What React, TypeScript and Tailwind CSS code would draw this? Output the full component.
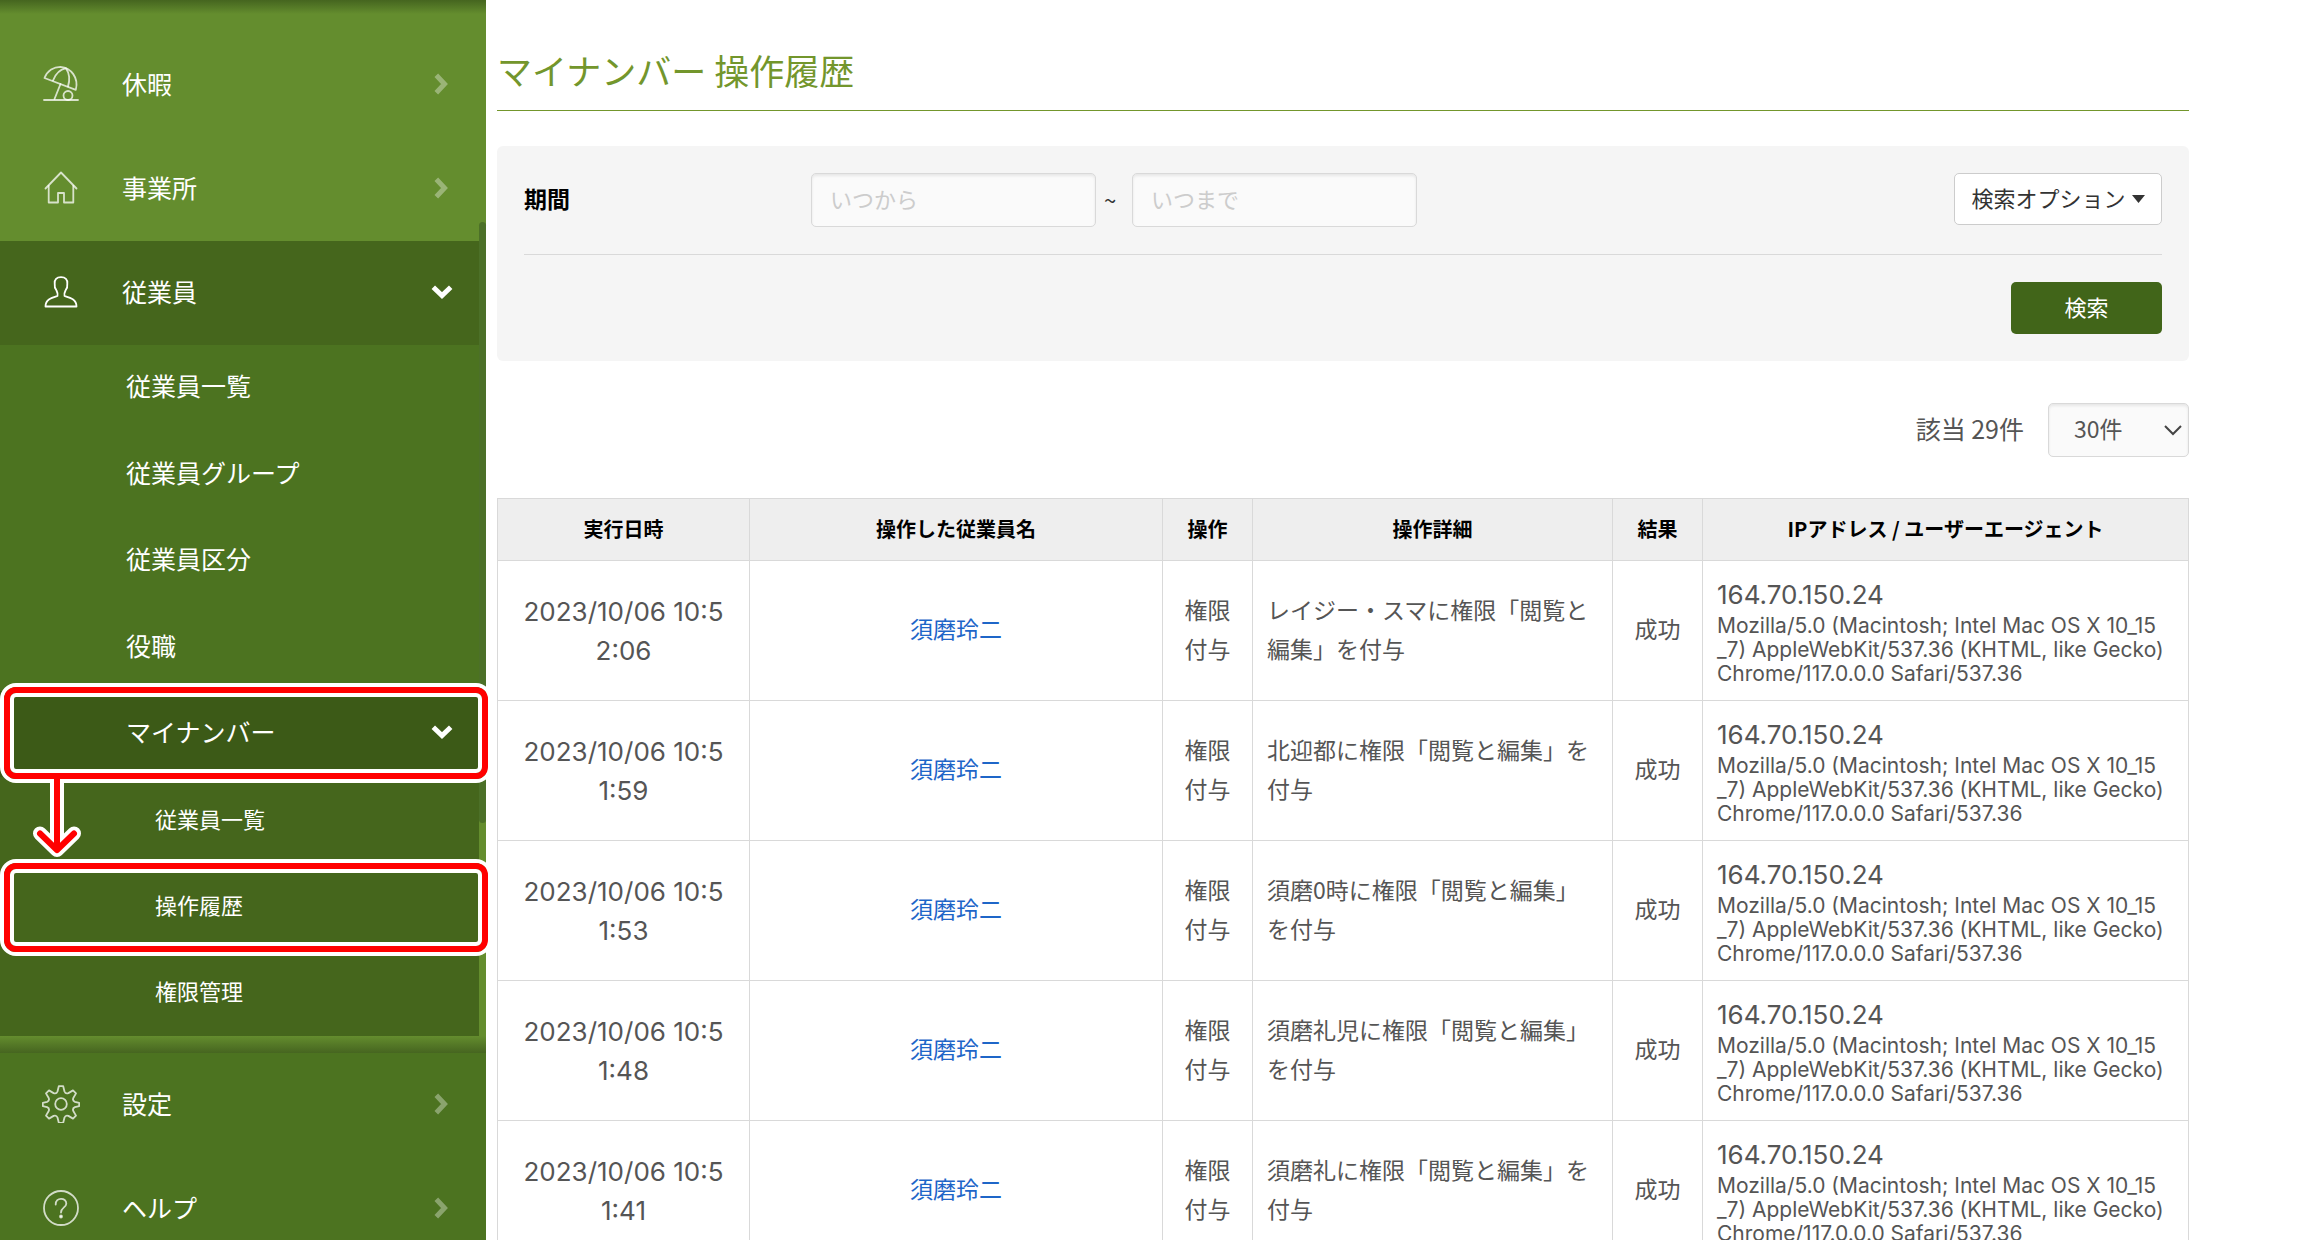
import React from "react";

type IconProps = { className?: string };

const stroke = {
  fill: "none",
  stroke: "currentColor",
  strokeWidth: 1.8,
  strokeLinejoin: "round" as const,
  strokeLinecap: "round" as const,
};

const UmbrellaIcon = ({ className }: IconProps) => (
  <svg viewBox="0 0 38 38" className={className} {...stroke} aria-hidden="true">
    <path d="M2.5 13C5.500 5.500 12 1.800 18.500 1.800C29 2.500 37 13 33.800 24.800Z" />
    <path d="M11 15.500C13.500 9 18 4.500 24 3.200C27.500 8.500 28 15 26 21.500" />
    <path d="M18.500 19L12.500 34" />
    <path d="M2 35H36" />
    <circle cx="26" cy="30.500" r="4.500" />
  </svg>
);

const HouseIcon = ({ className }: IconProps) => (
  <svg viewBox="0 0 38 38" className={className} {...stroke} aria-hidden="true">
    <path d="M3.500 19.500L19 3.500L34.500 19.500" />
    <path d="M6.700 17V33.500H16V24H22V33.500H31.300V17" />
  </svg>
);

const PersonIcon = ({ className }: IconProps) => (
  <svg viewBox="0 0 38 38" className={className} {...stroke} aria-hidden="true">
    <path d="M19 4.200C14.500 4.200 12.400 6.500 12.700 10.500C12.300 13.500 13 15.500 14.500 17.500C15.500 19.500 16 21.500 15.500 23C9 25 3.500 26.500 3.500 33.500H34.500C34.500 26.500 29 25 22.500 23C22 21.500 22.500 19.500 23.500 17.500C25 15.500 25.700 13.500 25.300 10.500C25.600 6.500 23.500 4.200 19 4.200Z" />
  </svg>
);

const GearIcon = ({ className }: IconProps) => (
  <svg viewBox="0 0 38 38" className={className} {...stroke} aria-hidden="true">
    <path d="M16.800 1.200h4.400l1.300 5.300a3 3 0 0 0 3.900 1.600l4.600-2.700l3 3l-2.700 4.600a3 3 0 0 0 1.600 3.900l4.300 1v3.200l-4.300 1a3 3 0 0 0-1.600 3.900l2.700 4.600l-3 3l-4.600-2.700a3 3 0 0 0-3.900 1.600l-1.300 5.300h-4.400l-1.300-5.300a3 3 0 0 0-3.900-1.600l-4.600 2.700l-3-3l2.700-4.600a3 3 0 0 0-1.600-3.900l-4.300-1v-3.200l4.300-1a3 3 0 0 0 1.600-3.900l-2.700-4.600l3-3l4.600 2.700a3 3 0 0 0 3.900-1.600z" />
    <circle cx="19" cy="19" r="5.800" />
  </svg>
);

const HelpIcon = ({ className }: IconProps) => (
  <svg viewBox="0 0 38 38" className={className} {...stroke} aria-hidden="true">
    <circle cx="19" cy="19" r="17" />
    <path d="M13.700 15.500C13.500 8 24.500 8 24.300 14.800C24.200 18.500 19 18.500 19 23.500" />
    <circle cx="19" cy="27.500" r="1" fill="currentColor" />
  </svg>
);

const ChevronRight = () => (
  <svg viewBox="0 0 14 22" className="h-[22px] w-[14px] text-white/35" aria-hidden="true">
    <path d="M2.300 2.300L10.500 11L2.300 19.700" fill="none" stroke="currentColor" strokeWidth="5" />
  </svg>
);

const ChevronDown = () => (
  <svg viewBox="0 0 22 14" className="h-[14px] w-[22px] text-white" aria-hidden="true">
    <path d="M2.300 2.300L11 10.500L19.700 2.300" fill="none" stroke="currentColor" strokeWidth="5" />
  </svg>
);

type MainItemProps = {
  label: string;
  Icon: React.FC<IconProps>;
  open?: boolean;
};

const MainItem = ({ label, Icon, open = false }: MainItemProps) => (
  <a
    href="#"
    className={
      "flex h-[104px] w-full items-center pl-[42px] text-[25px] text-white " +
      (open ? "bg-[#45661c] pr-[26px] pb-0.5" : "pr-[31px] pb-0.5")
    }
  >
    <Icon className={"h-[38px] w-[38px] " + (open ? "text-white" : "text-white/75")} />
    <span className="ml-[42px] flex-1">{label}</span>
    {open ? <ChevronDown /> : <ChevronRight />}
  </a>
);

type SubItem = {
  label: string;
  level: "sub" | "parent" | "nested";
  mark?: "from" | "to";
};

const subItems: SubItem[] = [
  { label: "従業員一覧", level: "sub" },
  { label: "従業員グループ", level: "sub" },
  { label: "従業員区分", level: "sub" },
  { label: "役職", level: "sub" },
  { label: "マイナンバー", level: "parent", mark: "from" },
  { label: "従業員一覧", level: "nested" },
  { label: "操作履歴", level: "nested", mark: "to" },
  { label: "権限管理", level: "nested" },
];

const levelClass = {
  sub: "bg-[#4c7320] pl-[126px] text-[25px]",
  parent: "bg-[#3c5a17] pl-[126px] text-[25px]",
  nested: "bg-[#45661c] pl-[155px] text-[22px]",
};

const Frame = ({ className }: { className: string }) => (
  <span
    className={
      "pointer-events-none absolute left-0 z-10 w-[492px] rounded-[16px] border-4 border-white " + className
    }
  >
    <span className="block h-full rounded-[12px] border-6 border-[#ff0000]">
      <span className="block h-full rounded-[6px] border-4 border-white" />
    </span>
  </span>
);

const Arrow = () => (
  <svg
    viewBox="0 0 50 80"
    className="pointer-events-none absolute top-[87px] left-8 z-20 h-20 w-[50px]"
    fill="none"
    strokeLinecap="round"
    strokeLinejoin="round"
    aria-hidden="true"
  >
    <path d="M25 5V71" stroke="#fff" strokeWidth="14" strokeLinecap="butt" />
    <path d="M8 55.500L25 72L42 55.500" stroke="#fff" strokeWidth="14" />
    <path d="M25 0V71" stroke="#f00" strokeWidth="6" strokeLinecap="butt" />
    <path d="M8 55.500L25 72L42 55.500" stroke="#f00" strokeWidth="6" />
  </svg>
);

const Sidebar = () => (
  <aside className="relative flex w-[486px] shrink-0 flex-col bg-[#648d2e]">
    <div className="pointer-events-none absolute inset-x-0 top-0 h-[14px] bg-linear-to-b from-[#45651f] to-[#648d2e]" />
    <div className="flex">
      <nav className="w-[479px] pt-[33px]">
        <MainItem label="休暇" Icon={UmbrellaIcon} />
        <MainItem label="事業所" Icon={HouseIcon} />
        <MainItem label="従業員" Icon={PersonIcon} open />
        <ul className="grid h-[691px] grid-rows-8">
          {subItems.map((item, i) => (
            <li key={i} className="relative">
              <a
                href="#"
                className={"flex h-full items-center pr-[26px] pb-1 text-white " + levelClass[item.level]}
              >
                <span className="flex-1">{item.label}</span>
                {item.level === "parent" && <ChevronDown />}
              </a>
              {item.mark === "from" && (
                <>
                  <Frame className="-top-2 -bottom-1.5" />
                  <Arrow />
                </>
              )}
              {item.mark === "to" && <Frame className="-top-1 -bottom-1.5" />}
            </li>
          ))}
        </ul>
      </nav>
      <div className="flex-1 pt-[222px]">
        <div className="h-[601px] rounded-full bg-[#4c7028]" />
      </div>
    </div>
    <div className="h-[17px] shrink-0 bg-linear-to-b from-[#648d2e] to-[#466520]" />
    <nav className="flex-1 bg-[#4c7320] pr-[7px]">
      <MainItem label="設定" Icon={GearIcon} />
      <MainItem label="ヘルプ" Icon={HelpIcon} />
    </nav>
  </aside>
);

const fieldClass =
  "h-[54px] rounded-[5px] border border-[#d9d9d9] bg-[#fafafa] pb-1 shadow-[inset_0_2px_3px_rgba(0,0,0,0.08)]";

const SearchPanel = () => (
  <form className="mt-[35px] rounded-[6px] bg-[#f5f5f5] p-[27px]" onSubmit={(e) => e.preventDefault()}>
    <div className="flex items-start border-b border-[#d9d9d9] pb-[27px]">
      <label htmlFor="from" className="w-[287px] text-[23px] leading-[50px] font-bold text-black">
        期間
      </label>
      <input
        id="from"
        type="text"
        placeholder="いつから"
        className={fieldClass + " w-[285px] px-[18px] text-[22px] placeholder:text-[#ccc]"}
      />
      <span className="w-[36px] pr-2 text-center text-[22px] leading-[52px] text-[#333]">~</span>
      <input
        id="to"
        type="text"
        aria-label="いつまで"
        placeholder="いつまで"
        className={fieldClass + " w-[285px] px-[18px] text-[22px] placeholder:text-[#ccc]"}
      />
      <button
        type="button"
        className="ml-auto flex h-[52px] w-[208px] items-center justify-center gap-1.5 rounded-[5px] border border-[#ccc] bg-white text-[22px] text-[#333]"
      >
        <span className="pb-1">検索オプション</span>
        <svg viewBox="0 0 13 8" className="h-2 w-[13px]" aria-hidden="true">
          <path d="M0 0H13L6.500 8Z" fill="currentColor" />
        </svg>
      </button>
    </div>
    <div className="flex justify-end pt-[27px]">
      <button type="submit" className="h-[52px] w-[151px] rounded-[5px] bg-[#416519] pb-1 text-[22px] text-white">
        検索
      </button>
    </div>
  </form>
);

const details = [
  { time: ["2023/10/06 10:5", "2:06"], detail: "レイジー・スマに権限「閲覧と編集」を付与" },
  { time: ["2023/10/06 10:5", "1:59"], detail: "北迎都に権限「閲覧と編集」を付与" },
  { time: ["2023/10/06 10:5", "1:53"], detail: "須磨0時に権限「閲覧と編集」を付与" },
  { time: ["2023/10/06 10:5", "1:48"], detail: "須磨礼児に権限「閲覧と編集」を付与" },
  { time: ["2023/10/06 10:5", "1:41"], detail: "須磨礼に権限「閲覧と編集」を付与" },
];

const headers = ["実行日時", "操作した従業員名", "操作", "操作詳細", "結果", "IPアドレス / ユーザーエージェント"];

const border = "border border-[#d9d9d9]";
const latinCell = border + " px-[14px] font-['Inter',sans-serif]";
const cell = border + " px-[14px] pb-1";

const HistoryTable = () => (
  <table className="mt-[41px] w-full table-fixed border-collapse text-[23px] leading-[39px] text-[#555]">
    <colgroup>
      <col className="w-[252px]" />
      <col />
      <col className="w-[90px]" />
      <col className="w-[360px]" />
      <col className="w-[90px]" />
      <col className="w-[486px]" />
    </colgroup>
    <thead>
      <tr className="h-[62px] bg-[#eee] text-[20px] text-black">
        {headers.map((h) => (
          <th key={h} scope="col" className={border + " pb-0.5 font-bold whitespace-nowrap"}>
            {h}
          </th>
        ))}
      </tr>
    </thead>
    <tbody>
      {details.map((row) => (
        <tr key={row.time[1]} className="h-[140px]">
          <td className={latinCell + " text-center text-[26px]"}>
            {row.time[0]}
            <wbr />
            {row.time[1]}
          </td>
          <td className={cell + " text-center"}>
            <a href="#" className="text-[#1e66c8]">
              須磨玲二
            </a>
          </td>
          <td className={cell + " text-center"}>権限付与</td>
          <td className={cell + " break-all"}>{row.detail}</td>
          <td className={cell + " text-center"}>成功</td>
          <td className={latinCell + " whitespace-nowrap"}>
            <div className="text-[26px]">164.70.150.24</div>
            <div className="text-[21px] leading-6">
              Mozilla/5.0 (Macintosh; Intel Mac OS X 10_15
              <br />
              _7) AppleWebKit/537.36 (KHTML, like Gecko)
              <br />
              Chrome/117.0.0.0 Safari/537.36
            </div>
          </td>
        </tr>
      ))}
    </tbody>
  </table>
);

export default function App() {
  return (
    <div className="flex h-screen overflow-hidden bg-white font-['Noto_Sans_CJK_JP',sans-serif]">
      <Sidebar />
      <main className="min-w-0 flex-1 pr-[111px] pl-[11px]">
        <h1 className="border-b border-[#73962c] pt-[44px] pb-[14px] text-[35px] leading-[52px] text-[#73962c]">
          マイナンバー 操作履歴
        </h1>
        <SearchPanel />
        <div className="mt-[42px] flex items-center justify-end gap-6 text-[#555]">
          <label htmlFor="count" className="pb-0.5 text-[25px]">
            該当 29件
          </label>
          <span className="relative flex">
            <select
              id="count"
              defaultValue="30"
              className={fieldClass + " w-[141px] appearance-none pl-[25px] text-[23px]"}
            >
              <option value="30">30件</option>
              <option value="50">50件</option>
            </select>
            <svg
              viewBox="0 0 18 11"
              className="pointer-events-none absolute top-[22px] right-[7px] h-[11px] w-[18px]"
              aria-hidden="true"
            >
              <path d="M1 1L9 9L17 1" fill="none" stroke="#444" strokeWidth="2" />
            </svg>
          </span>
        </div>
        <HistoryTable />
      </main>
    </div>
  );
}
